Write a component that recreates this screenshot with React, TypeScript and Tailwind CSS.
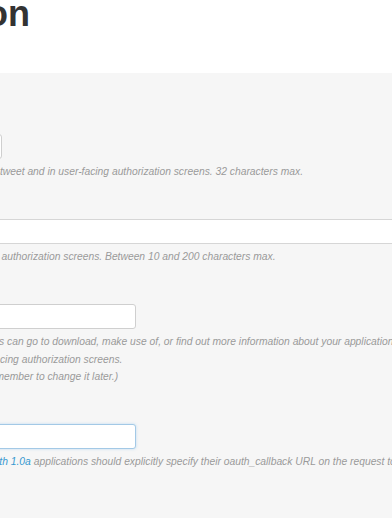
import type React from "react";

interface Field {
  label: string;
  required?: boolean;
  kind: "input" | "textarea";
  width: string;
  focused?: boolean;
  help: React.ReactNode;
}

const fields: Field[] = [
  {
    label: "Name:",
    required: true,
    kind: "input",
    width: "w-[290px]",
    help: "Your application name. This is used to attribute the source of a tweet and in user-facing authorization screens. 32 characters max.",
  },
  {
    label: "Description:",
    required: true,
    kind: "textarea",
    width: "w-[760px]",
    help: "Your application description, which will be shown in user-facing authorization screens. Between 10 and 200 characters max.",
  },
  {
    label: "WebSite:",
    required: true,
    kind: "input",
    width: "w-[424px]",
    help: (
      <>
        Your application's publicly accessible landing page, where users can go to download, make use of, or find out more information about your application.
        <br />
        It's used in tweet source attribution and will be shown in user-facing authorization screens.
        <br />
        (If you don't have a URL yet, just put a placeholder here but remember to change it later.)
      </>
    ),
  },
  {
    label: "Callback URL:",
    kind: "input",
    width: "w-[424px]",
    focused: true,
    help: (
      <>
        Where should we return after successfully authenticating?{" "}
        <a href="#" className="text-[#3598d0]">
          OAuth 1.0a
        </a>{" "}
        applications should explicitly specify their oauth_callback URL on the request token step, regardless of the value given here. To restrict your application from using callbacks, leave this field blank.
      </>
    ),
  },
];

export default function App() {
  return (
    <div className="w-full h-[523px] overflow-hidden bg-white font-['Liberation_Sans',Arial,sans-serif]">
      {/* the visible area is the right-hand part of a wider page */}
      <div className="-ml-[480px] w-[1500px]">
        <div className="w-[510px] text-right">
          <h1 className="text-[36px] leading-[28px] font-bold text-[#333] whitespace-nowrap">
            Create an application
          </h1>
        </div>

        <form className="mt-[45px] bg-[#f6f6f6] pt-[61px] pb-[47.5px] pl-[20px]">
          {fields.map((f) => (
            <div key={f.label} className="flex mb-[38.5px] last:mb-0">
              <label className="w-[172px] shrink-0 pr-5 text-right text-[12px] leading-[25px] font-bold text-[#333]">
                {f.label}
                {f.required && <span className="text-[#c00]"> *</span>}
              </label>
              <div className="min-w-0">
                {f.kind === "textarea" ? (
                  <textarea
                    rows={1}
                    className={`${f.width} h-[25px] block resize-none border-y border-[#d6d6d6] bg-white outline-none`}
                  />
                ) : (
                  <input
                    type="text"
                    className={`${f.width} h-[25px] block rounded-[3px] border bg-white outline-none ${
                      f.focused
                        ? "border-[#a3c9e6] shadow-[0_0_3px_rgba(82,168,236,0.35)]"
                        : "border-[#cfcfcf]"
                    }`}
                  />
                )}
                <p className="mt-1 text-[10.3px] leading-[17.5px] italic text-[#9a9a9a] whitespace-nowrap">
                  {f.help}
                </p>
              </div>
            </div>
          ))}
        </form>
      </div>
    </div>
  );
}
